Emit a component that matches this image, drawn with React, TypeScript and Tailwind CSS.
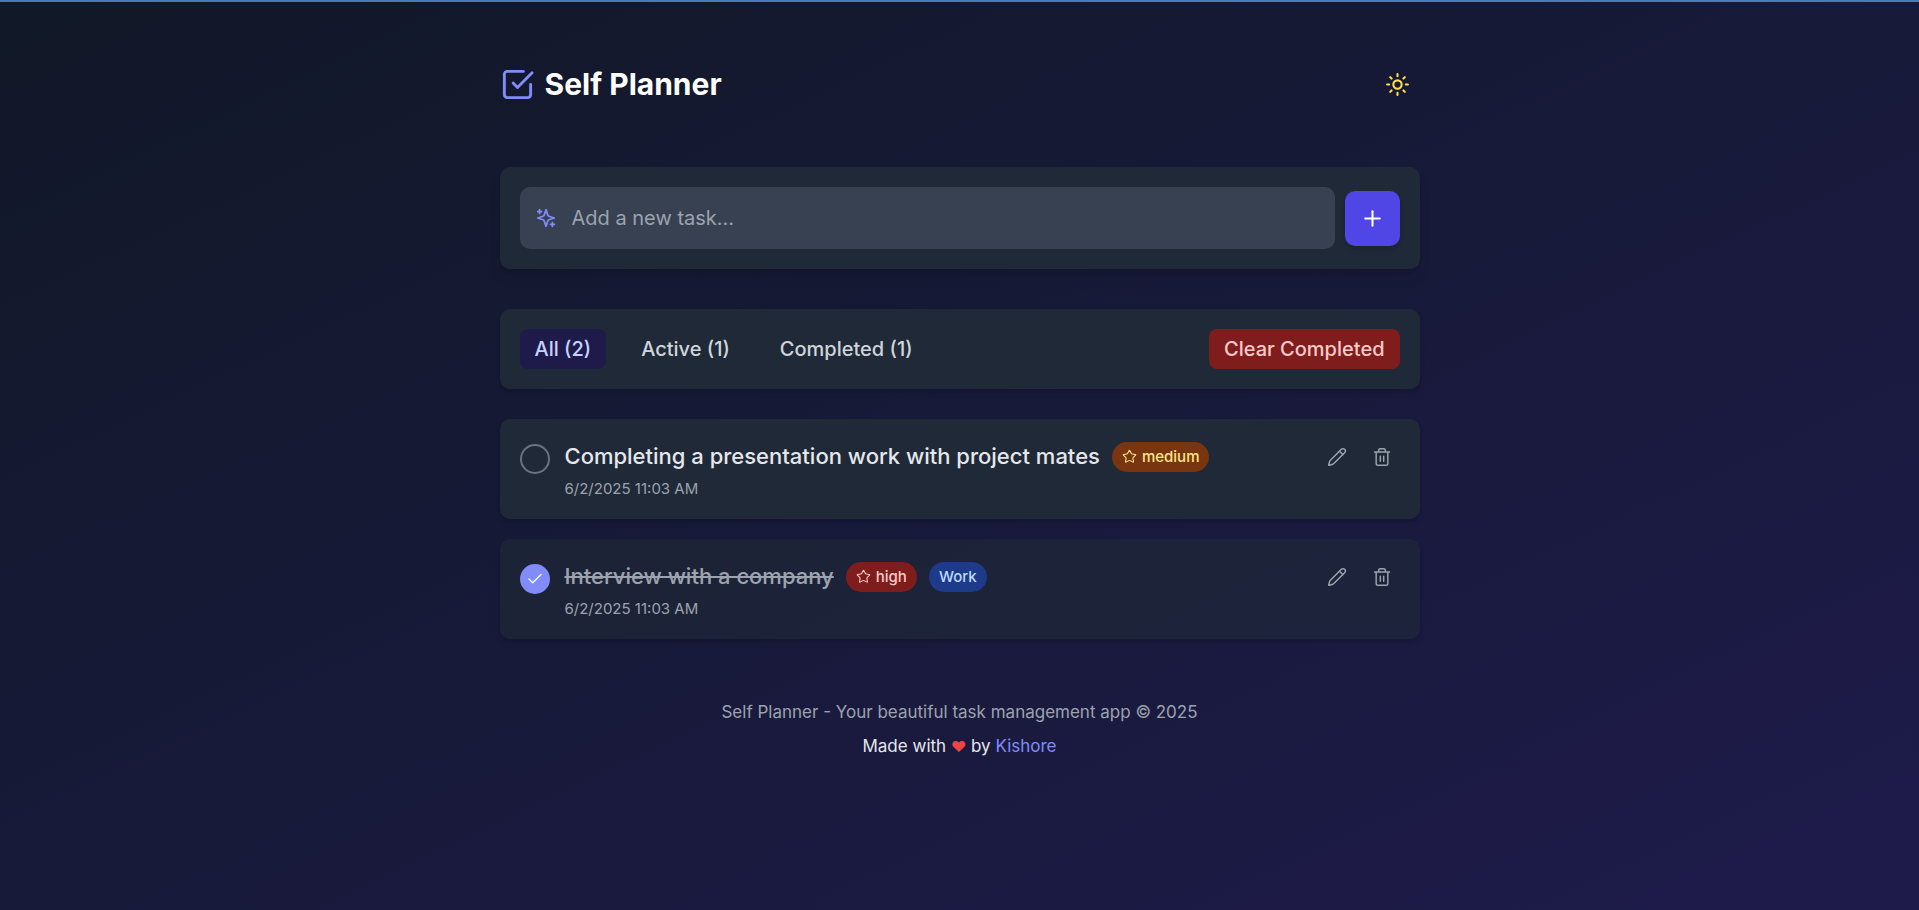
import { useState } from "react";
import type { ReactNode } from "react";
import { Check, Pencil, Plus, Star, Sun } from "lucide-react";
import { FiCheckSquare } from "react-icons/fi";

type Priority = "high" | "medium";
type Filter = "all" | "active" | "completed";

interface Task {
  id: number;
  title: string;
  created: string;
  priority: Priority;
  category?: string;
  completed: boolean;
}

const initialTasks: Task[] = [
  {
    id: 1,
    title: "Completing a presentation work with project mates",
    created: "6/2/2025 11:03 AM",
    priority: "medium",
    completed: false,
  },
  {
    id: 2,
    title: "Interview with a company",
    created: "6/2/2025 11:03 AM",
    priority: "high",
    category: "Work",
    completed: true,
  },
];

const priorityStyles: Record<Priority, string> = {
  high: "bg-[#7f1d1d] text-[#fecaca]",
  medium: "bg-[#78350f] text-[#fde68a]",
};

function SparklesIcon() {
  return (
    <svg
      className="size-[22px] shrink-0 text-[#818cf8]"
      viewBox="0 0 24 24"
      fill="none"
      stroke="currentColor"
      strokeWidth="2"
      strokeLinecap="round"
      strokeLinejoin="round"
      aria-hidden="true"
    >
      <path d="m12 3-1.912 5.813a2 2 0 0 1-1.275 1.275L3 12l5.813 1.912a2 2 0 0 1 1.275 1.275L12 21l1.912-5.813a2 2 0 0 1 1.275-1.275L21 12l-5.813-1.912a2 2 0 0 1-1.275-1.275L12 3Z" />
      <path d="M5 3v4M19 17v4M3 5h4M17 19h4" />
    </svg>
  );
}

function TrashIcon() {
  return (
    <svg
      className="size-5"
      viewBox="0 0 24 24"
      fill="none"
      stroke="currentColor"
      strokeWidth="1.75"
      strokeLinecap="round"
      strokeLinejoin="round"
      aria-hidden="true"
    >
      <path d="M3 6h18M19 6v14c0 1-1 2-2 2H7c-1 0-2-1-2-2V6M8 6V4c0-1 1-2 2-2h4c1 0 2 1 2 2v2M10 11v6M14 11v6" />
    </svg>
  );
}

function Badge({ className, children }: { className: string; children: ReactNode }) {
  return (
    <span
      className={`inline-flex h-[30px] items-center gap-[5px] rounded-full px-2.5 text-[15px] leading-5 font-medium ${className}`}
    >
      {children}
    </span>
  );
}

function TaskCard({ task, onToggle, onDelete }: { task: Task; onToggle: () => void; onDelete: () => void }) {
  return (
    <li
      className={`flex items-start gap-[15px] rounded-[10px] p-5 shadow-md ${
        task.completed ? "bg-[#1f2937]/60" : "bg-[#1f2937]"
      }`}
    >
      <label className="relative mt-[5px] block size-[30px] shrink-0">
        <input
          type="checkbox"
          checked={task.completed}
          onChange={onToggle}
          aria-label={task.title}
          className="block size-full appearance-none rounded-full border-2 border-[#6b7280] checked:border-[#818cf8] checked:bg-[#818cf8]"
        />
        {task.completed && (
          <span className="pointer-events-none absolute inset-0 flex items-center justify-center text-white">
            <Check size={18} strokeWidth={1.75} />
          </span>
        )}
      </label>
      <div className="min-w-0 flex-1">
        <div className="flex min-h-[35px] flex-wrap items-center gap-x-3">
          <h3
            className={`text-[22px] leading-[35px] font-medium ${
              task.completed ? "text-[#9ca3af] line-through" : "text-[#e5e7eb]"
            }`}
          >
            {task.title}
          </h3>
          <Badge className={priorityStyles[task.priority]}>
            <Star size={15} strokeWidth={1.75} />
            {task.priority}
          </Badge>
          {task.category && <Badge className="bg-[#1e3a8a] text-[#bfdbfe]">{task.category}</Badge>}
        </div>
        <p className="mt-[5px] text-[15px] leading-5 text-[#9ca3af]">{task.created}</p>
      </div>
      <div className="flex gap-2.5 text-[#9ca3af]">
        <button type="button" aria-label="Edit task" className="flex size-[35px] items-center justify-center">
          <Pencil size={20} strokeWidth={1.75} />
        </button>
        <button
          type="button"
          aria-label="Delete task"
          onClick={onDelete}
          className="flex size-[35px] items-center justify-center"
        >
          <TrashIcon />
        </button>
      </div>
    </li>
  );
}

export default function App() {
  const [tasks, setTasks] = useState<Task[]>(initialTasks);
  const [filter, setFilter] = useState<Filter>("all");

  const completed = tasks.filter((t) => t.completed).length;
  const tabs: { key: Filter; label: string }[] = [
    { key: "all", label: `All (${tasks.length})` },
    { key: "active", label: `Active (${tasks.length - completed})` },
    { key: "completed", label: `Completed (${completed})` },
  ];
  const visible = tasks.filter((t) => filter === "all" || t.completed === (filter === "completed"));

  return (
    <div className="min-h-screen border-t-2 border-[#4a7ab8] bg-linear-to-br/srgb from-[#111827] to-[#1e1b4b] font-['Inter',sans-serif] text-white">
      <div className="mx-auto max-w-[960px] px-5 py-[60px]">
        <header className="mb-[60px] flex items-center justify-between">
          <div className="flex items-center gap-2.5">
            <FiCheckSquare size={35} className="text-[#818cf8]" />
            <h1 className="text-[30px] leading-[45px] font-bold">Self Planner</h1>
          </div>
          <button
            type="button"
            aria-label="Toggle theme"
            className="flex size-[45px] items-center justify-center text-[#fde047]"
          >
            <Sun size={25} />
          </button>
        </header>

        <main>
          <form
            className="mb-10 flex items-center gap-2.5 rounded-[10px] bg-[#1f2937] p-5 shadow-lg"
            onSubmit={(e) => e.preventDefault()}
          >
            <label className="flex h-[62px] flex-1 items-center gap-[15px] rounded-[10px] bg-[#374151] px-[15px]">
              <SparklesIcon />
              <input
                type="text"
                aria-label="Add a new task"
                placeholder="Add a new task..."
                className="w-full bg-transparent text-xl leading-[30px] outline-none placeholder:text-[#9ca3af]"
              />
            </label>
            <button
              type="submit"
              aria-label="Add task"
              className="flex size-[55px] items-center justify-center rounded-[10px] bg-[#4f46e5] shadow-md"
            >
              <Plus size={25} />
            </button>
          </form>

          <div className="mb-[30px] flex flex-wrap items-center justify-between gap-5 rounded-[10px] bg-[#1f2937] p-5 shadow-md">
            <div className="flex flex-wrap gap-5">
              {tabs.map((tab) => (
                <button
                  key={tab.key}
                  type="button"
                  onClick={() => setFilter(tab.key)}
                  className={`rounded-lg px-[15px] py-[5px] text-xl leading-[30px] font-medium ${
                    filter === tab.key ? "bg-[#1e1b4b] text-[#c7d2fe]" : "text-[#d1d5db]"
                  }`}
                >
                  {tab.label}
                </button>
              ))}
            </div>
            <button
              type="button"
              onClick={() => setTasks(tasks.filter((t) => !t.completed))}
              className="rounded-lg bg-[#7f1d1d] px-[15px] py-[5px] text-xl leading-[30px] font-medium text-[#fecaca]"
            >
              Clear Completed
            </button>
          </div>

          <ul className="flex flex-col gap-5">
            {visible.map((task) => (
              <TaskCard
                key={task.id}
                task={task}
                onToggle={() =>
                  setTasks(tasks.map((t) => (t.id === task.id ? { ...t, completed: !t.completed } : t)))
                }
                onDelete={() => setTasks(tasks.filter((t) => t.id !== task.id))}
              />
            ))}
          </ul>
        </main>

        <footer className="mt-[60px] text-center text-[17px] leading-[26px]">
          <p className="text-[#9ca3af]">Self Planner - Your beautiful task management app © 2025</p>
          <p className="mt-2 text-[#e5e7eb]">
            Made with <span className="text-[15px] text-[#ef4444]">♥</span> by{" "}
            <a href="#kishore" className="text-[#818cf8]">
              Kishore
            </a>
          </p>
        </footer>
      </div>
    </div>
  );
}
